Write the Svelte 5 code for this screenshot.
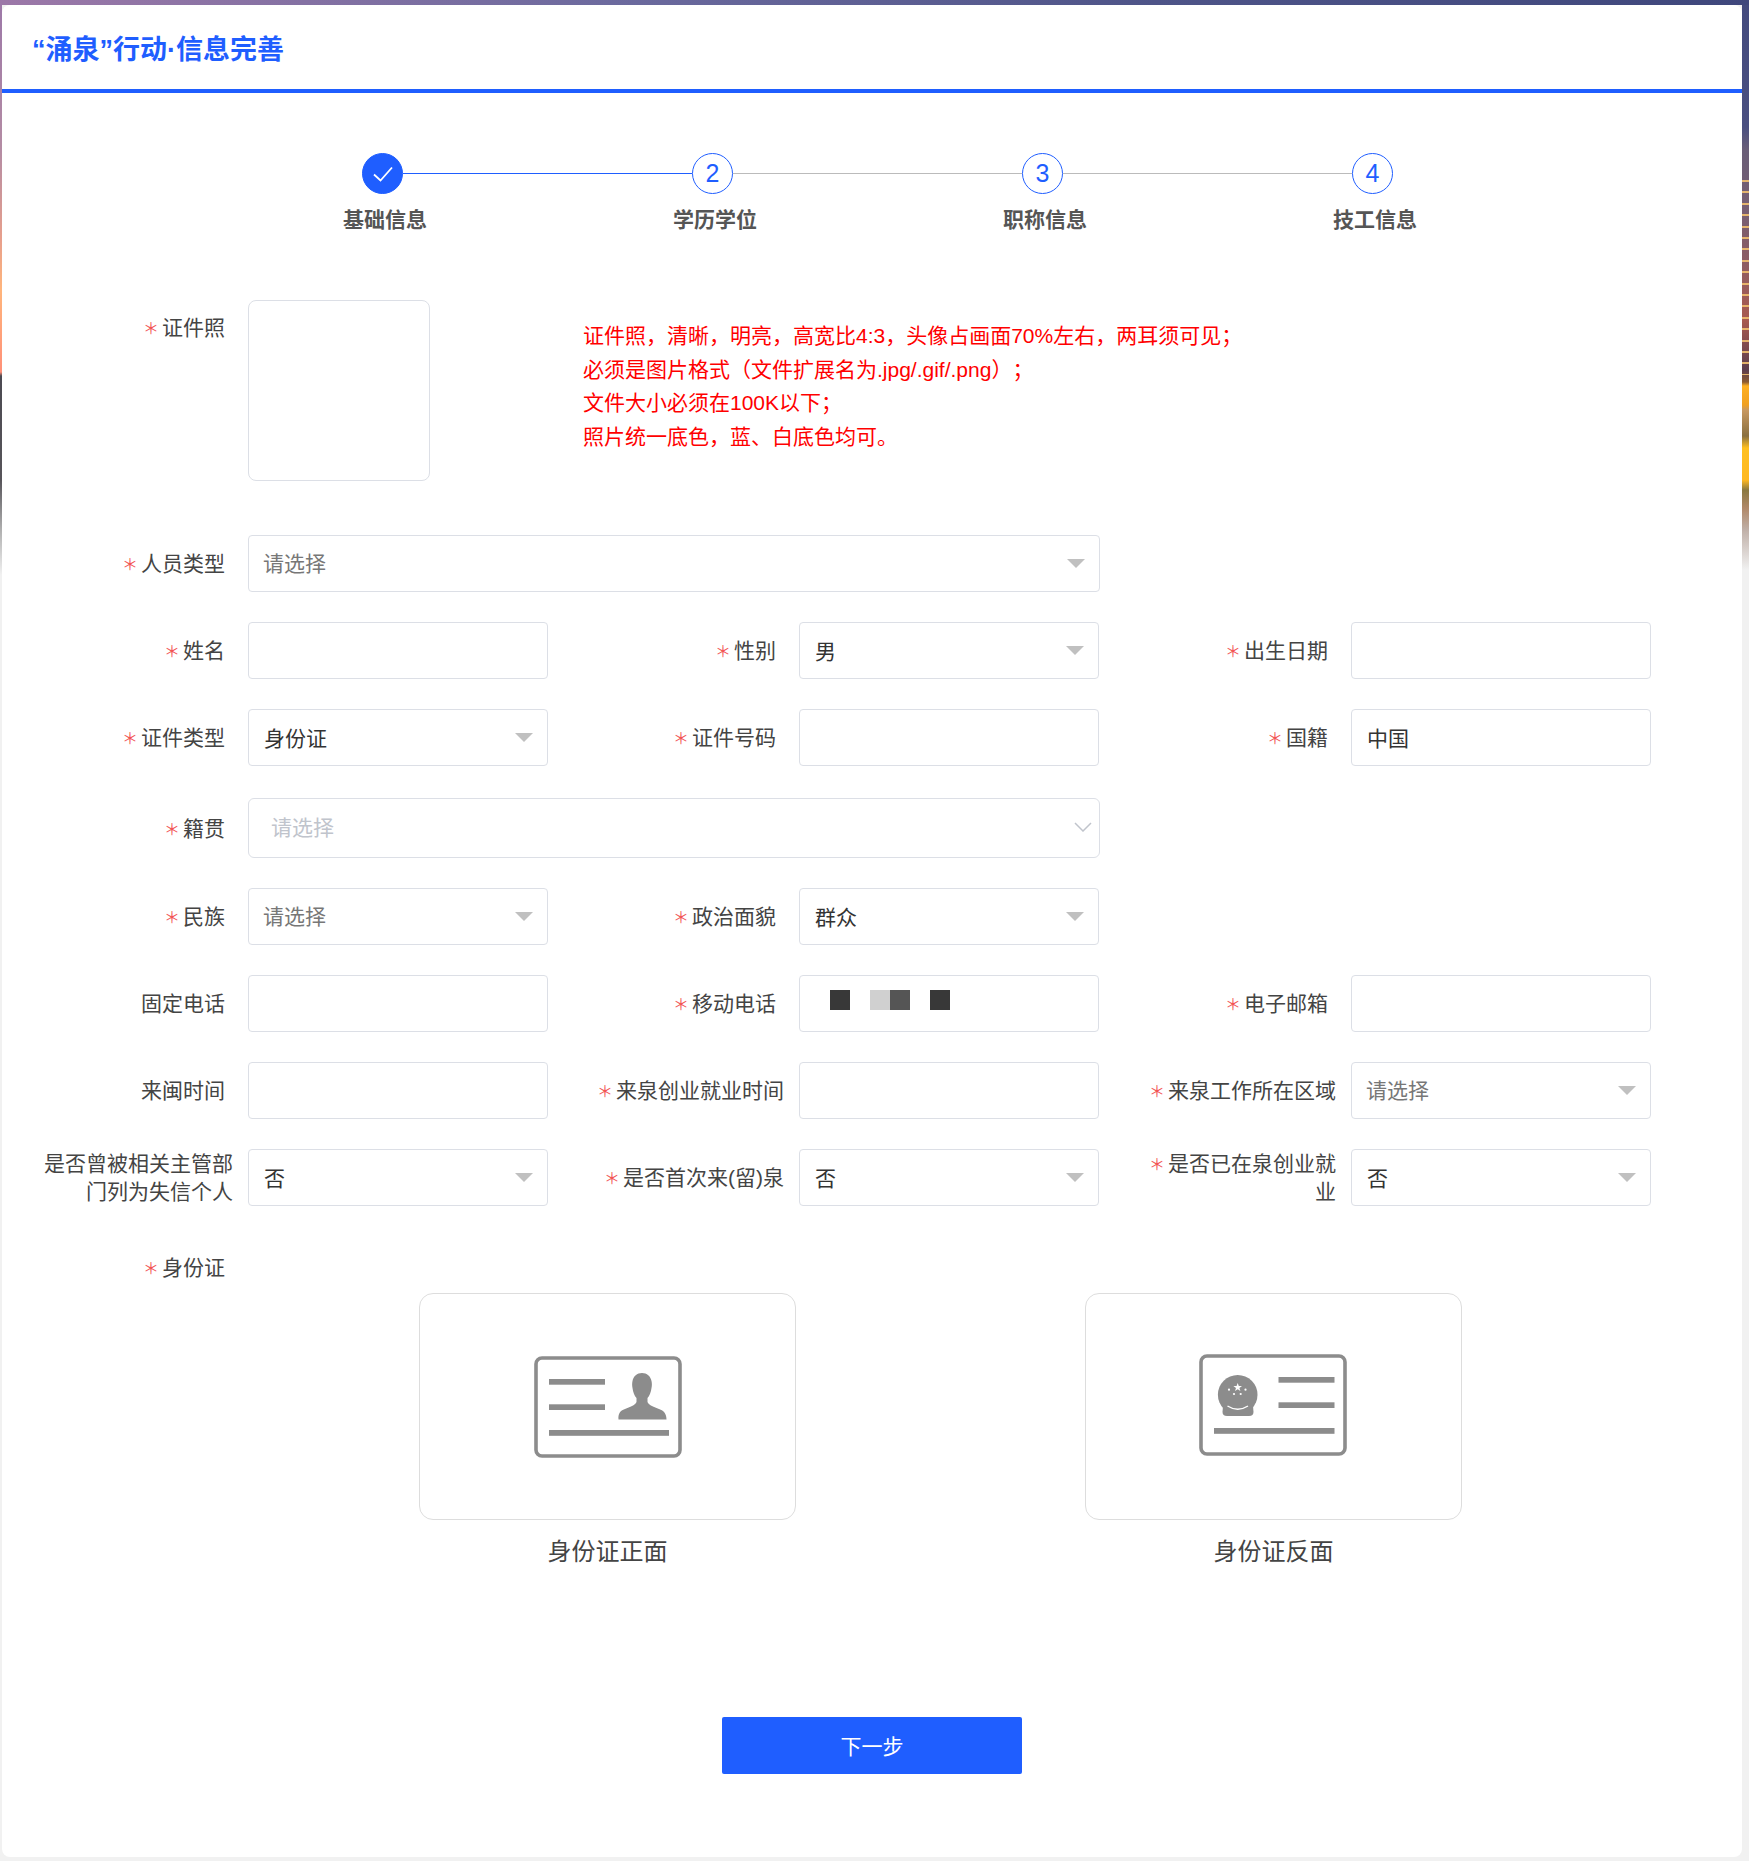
<script lang="ts">
  const steps = [
    { n: 1, label: '基础信息', done: true },
    { n: 2, label: '学历学位', done: false },
    { n: 3, label: '职称信息', done: false },
    { n: 4, label: '技工信息', done: false },
  ];

  const hints = [
    '证件照，清晰，明亮，高宽比4:3，头像占画面70%左右，两耳须可见；',
    '必须是图片格式（文件扩展名为.jpg/.gif/.png）；',
    '文件大小必须在100K以下；',
    '照片统一底色，蓝、白底色均可。',
  ];

  const rows = [
    [{ label: '姓名', req: true }, { label: '性别', req: true, select: true, value: '男' }, { label: '出生日期', req: true }],
    [{ label: '证件类型', req: true, select: true, value: '身份证' }, { label: '证件号码', req: true }, { label: '国籍', req: true, value: '中国' }],
  ];

  const rows2 = [
    [{ label: '民族', req: true, select: true, placeholder: '请选择' }, { label: '政治面貌', req: true, select: true, value: '群众' }],
    [{ label: '固定电话' }, { label: '移动电话', req: true, masked: true }, { label: '电子邮箱', req: true }],
    [{ label: '来闽时间' }, { label: '来泉创业就业时间', req: true, long: true }, { label: '来泉工作所在区域', req: true, long: true, select: true, placeholder: '请选择' }],
    [
      { label: '是否曾被相关主管部门列为失信个人', long: true, select: true, value: '否' },
      { label: '是否首次来(留)泉', req: true, long: true, select: true, value: '否' },
      { label: '是否已在泉创业就业', req: true, long: true, select: true, value: '否' },
    ],
  ];
</script>

{#snippet field(f)}
  <div class="field">
    <div class="label" class:long={f.long}>
      <span>{#if f.req}<i class="star">＊</i>{/if}{f.label}</span>
    </div>
    <div class="control">
      {#if f.masked}
        <div class="mask">
          <b class="dark"></b><b class="gap"></b><b class="light"></b><b class="mid"></b><b class="gap"></b><b class="dark"></b>
        </div>
      {:else if f.placeholder}
        <span class="placeholder">{f.placeholder}</span>
      {:else if f.value}
        <span class="value">{f.value}</span>
      {/if}
      {#if f.select}<em class="arrow"></em>{/if}
    </div>
  </div>
{/snippet}

<div class="page">
  <div class="card">
    <header class="head">
      <h1>“涌泉”行动·信息完善</h1>
    </header>

    <div class="steps">
      {#each steps as s, i}
        <div class="step" class:last={i === steps.length - 1}>
          <div class="step-head">
            <div class="circle" class:done={s.done}>
              {#if s.done}
                <svg width="22" height="18" viewBox="0 0 22 18" fill="none">
                  <path d="M2 9.5 L8.5 15.5 L20 2.5" stroke="#fff" stroke-width="1.8" />
                </svg>
              {:else}
                {s.n}
              {/if}
            </div>
            {#if i < steps.length - 1}
              <div class="line" class:on={s.done}></div>
            {/if}
          </div>
          <div class="step-label">{s.label}</div>
        </div>
      {/each}
    </div>

    <div class="form">
      <div class="photo-row">
        <div class="label tall"><span><i class="star">＊</i>证件照</span></div>
        <div class="photo"></div>
        <div class="hint">
          {#each hints as h}
            <p>{h}</p>
          {/each}
        </div>
      </div>

      <div class="row">
        <div class="field wide">
          <div class="label"><span><i class="star">＊</i>人员类型</span></div>
          <div class="control">
            <span class="placeholder">请选择</span>
            <em class="arrow"></em>
          </div>
        </div>
      </div>

      {#each rows as r}
        <div class="row">
          {#each r as f}
            {@render field(f)}
          {/each}
        </div>
      {/each}

      <div class="row cascader-row">
        <div class="field wide">
          <div class="label"><span><i class="star">＊</i>籍贯</span></div>
          <div class="control cascader">
            <span class="muted">请选择</span>
            <svg class="chevron" width="18" height="10" viewBox="0 0 18 10" fill="none">
              <path d="M1 1 L9 9 L17 1" stroke="#c0c4cc" stroke-width="1.5" />
            </svg>
          </div>
        </div>
      </div>

      {#each rows2 as r}
        <div class="row">
          {#each r as f}
            {@render field(f)}
          {/each}
        </div>
      {/each}

      <div class="label tall id-label"><span><i class="star">＊</i>身份证</span></div>

      <div class="uploads">
        <div class="upload">
          <div class="upload-box">
            <svg width="148" height="102" viewBox="0 0 148 102" fill="#8c8c8c">
              <rect x="2" y="2" width="144" height="98" rx="6" fill="none" stroke="#8c8c8c" stroke-width="3.6" />
              <rect x="15" y="23" width="56" height="5.7" />
              <rect x="15" y="48.3" width="56" height="5.7" />
              <rect x="15" y="74" width="120" height="5.8" />
              <path d="M84.5 63.5 C84 58 86 54.5 91 53 C96 51 101 49.5 102.5 46 L102.5 42 C100.5 40 99 36 98.5 32 C98 30 98 27 98.5 25 C99.5 20 103 17 108 17 C113 17 116.5 20 117.5 25 C118 27 118 30 117.5 32 C117 36 115.5 40 113.5 42 L113.5 46 C115 49.5 120 51 125 53 C130 54.5 132.5 58 132.5 63.5 Z" />
            </svg>
          </div>
          <div class="caption">身份证正面</div>
        </div>
        <div class="upload">
          <div class="upload-box">
            <svg class="back" width="148" height="102" viewBox="0 0 148 102" fill="#8c8c8c">
              <rect x="2" y="2" width="144" height="98" rx="6" fill="none" stroke="#8c8c8c" stroke-width="3.6" />
              <rect x="79.5" y="23" width="56" height="5.7" />
              <rect x="79.5" y="48.3" width="56" height="5.7" />
              <rect x="15" y="74" width="120.5" height="5.8" />
              <circle cx="38.7" cy="40.7" r="19.8" />
              <path d="M24 52 L23.5 58 Q23.5 62 28 62 L50 62 Q54.5 62 54.5 58 L54 52 Z" />
              <path d="M28.5 52 Q38.7 58.5 49 52" fill="none" stroke="#fff" stroke-width="1.4" />
              <path d="M38.7 29 L39.8 32 L43 32 L40.4 34 L41.4 37 L38.7 35.2 L36 37 L37 34 L34.4 32 L37.6 32 Z" fill="#fff" />
              <circle cx="30" cy="35.7" r="1.1" fill="#fff" />
              <circle cx="46.5" cy="35.7" r="1.1" fill="#fff" />
              <circle cx="35" cy="40" r="1.1" fill="#fff" />
              <circle cx="41.7" cy="40" r="1.1" fill="#fff" />
            </svg>
          </div>
          <div class="caption">身份证反面</div>
        </div>
      </div>

      <div class="actions">
        <button class="next">下一步</button>
      </div>
    </div>
  </div>
</div>

<style>
  :global(body) {
    margin: 0;
    background: #f1f1f1;
  }

  .page {
    padding: 5px 7px 4px 2px;
    font-family: "Liberation Sans", "Noto Sans CJK SC", sans-serif;
    background-color: #f1f1f1;
    background-repeat: no-repeat;
    background-image:
      linear-gradient(to right, #9c78a8, #6c6a9e 35%, #4e5488 66%, #3f477c),
      linear-gradient(to bottom, #9c78a8 0, #b48ca4 150px, #e8a08c 240px, #ffb57c 290px, #ff9078 372px, #4c4a52 376px, #57555a 480px, #b0b0b0 530px, #f1f1f1 575px),
      repeating-linear-gradient(to bottom, rgba(240, 190, 110, 0.9) 0, rgba(240, 190, 110, 0.9) 2px, transparent 2px, transparent 11.4px),
      linear-gradient(to bottom, #434a7e 0, #4a4f80 127px, #6a5e78 150px, #7a5e70 220px, #a85a50 320px, #5c3c4c 370px, #8c5a30 382px, #ffb020 386px, #f0a020 405px, #c89860 410px, #8a7040 436px, #ffc020 448px, #ffb820 480px, #8a7840 490px, #b08868 508px, #c0b0a8 530px, #f1f1f1 570px);
    background-size: 100% 5px, 2px 575px, 7px 195px, 7px 570px;
    background-position: 0 0, 0 0, 100% 180px, 100% 0;
  }

  .card {
    background: #fff;
    border-radius: 8px;
    overflow: hidden;
  }

  .head {
    box-sizing: border-box;
    height: 88px;
    border-bottom: 4px solid #1f5eff;
    padding: 0 0 0 30px;
    display: flex;
    align-items: center;
  }

  .head h1 {
    margin: 0;
    font-size: 27px;
    font-weight: 700;
    color: #1f5eff;
  }

  .steps {
    display: flex;
    padding: 60px 0 0 360px;
    margin-bottom: 65px;
  }

  .step { width: 330px; }
  .step.last { width: 41px; }

  .step-head {
    display: flex;
    align-items: center;
  }

  .circle {
    box-sizing: border-box;
    flex: 0 0 41px;
    height: 41px;
    border: 1px solid #1f5eff;
    border-radius: 50%;
    color: #1f5eff;
    font-size: 25px;
    display: flex;
    align-items: center;
    justify-content: center;
  }

  .circle.done { background: #1f5eff; }

  .line {
    flex: 1;
    height: 1px;
    background: #bbb;
  }

  .line.on { background: #1f5eff; }

  .step-label {
    width: 88px;
    margin: 10px 0 0 -21px;
    line-height: 31px;
    font-size: 21px;
    font-weight: 700;
    color: #555;
    text-align: center;
    white-space: nowrap;
  }

  .form { padding-left: 33px; }

  .photo-row {
    display: flex;
    height: 181px;
    margin-bottom: 54px;
  }

  .photo {
    box-sizing: border-box;
    width: 182px;
    height: 181px;
    border: 1px solid #dcdfe6;
    border-radius: 8px;
  }

  .hint {
    margin-left: 153px;
    padding-top: 19px;
    color: #f00;
    font-size: 21px;
    line-height: 33.6px;
    text-spacing-trim: space-all;
  }

  .hint p { margin: 0; white-space: nowrap; }

  .label {
    box-sizing: border-box;
    flex: 0 0 213px;
    width: 213px;
    padding-right: 23px;
    text-align: right;
    font-size: 21px;
    line-height: 28px;
    color: #444;
    display: flex;
    align-items: center;
    justify-content: flex-end;
  }

  .label.long { padding-right: 15px; }

  .label.tall {
    height: 54px;
    align-items: center;
  }

  .star {
    font-style: normal;
    font-size: 16px;
    color: #f25555;
    margin-right: 3px;
    vertical-align: 1px;
    font-family: "Noto Sans CJK SC", sans-serif;
  }

  .row {
    display: grid;
    grid-template-columns: 551px 552px 551px;
    height: 57px;
    margin-bottom: 30px;
  }

  .cascader-row {
    height: 60px;
    margin-top: 32px;
  }

  .field { display: flex; }
  .field.wide { grid-column: span 2; }

  .control {
    box-sizing: border-box;
    position: relative;
    flex: 1;
    max-width: 300px;
    border: 1px solid #dcdfe6;
    border-radius: 4px;
    padding: 0 15px;
    display: flex;
    align-items: center;
    font-size: 21px;
    color: #333;
  }

  .wide .control { max-width: 852px; }

  .cascader {
    border-radius: 6px;
    padding-left: 22px;
  }

  .placeholder { color: #777; margin: 0 0 4px -1px; }
  .muted { color: #c0c4cc; margin-bottom: 4px; }
  .value { color: #333; margin-bottom: 2px; }

  .arrow {
    position: absolute;
    right: 14px;
    top: 50%;
    margin-top: -5px;
    border-left: 9px solid transparent;
    border-right: 9px solid transparent;
    border-top: 9px solid #c0c0c0;
  }

  .chevron {
    position: absolute;
    right: 7px;
    top: 23px;
  }

  .mask {
    display: flex;
    margin: -8px 0 0 15px;
  }

  .mask b {
    display: block;
    width: 20px;
    height: 20px;
  }

  .mask .dark { background: #383838; }
  .mask .gap { background: #fff; }
  .mask .light { background: #d0d0d0; }
  .mask .mid { background: #555; }

  .id-label { margin-top: 34px; }

  .uploads {
    display: flex;
    gap: 289px;
    margin: -1px 0 0 384px;
  }

  .upload { width: 377px; }

  .upload-box {
    box-sizing: border-box;
    height: 227px;
    border: 1px solid #ddd;
    border-radius: 14px;
    display: flex;
    align-items: center;
    justify-content: center;
  }

  .back { margin: 0 2px 3px 0; }

  .caption {
    margin-top: 12px;
    line-height: 40px;
    font-size: 24px;
    color: #444;
    text-align: center;
  }

  .actions {
    display: flex;
    justify-content: center;
    margin: 145px 0 0 -33px;
    padding-bottom: 83px;
  }

  .next {
    width: 300px;
    height: 57px;
    border: 0;
    border-radius: 2px;
    padding: 0 0 2px;
    background: #1f5eff;
    color: #fff;
    font-family: inherit;
    font-size: 21px;
  }
</style>
